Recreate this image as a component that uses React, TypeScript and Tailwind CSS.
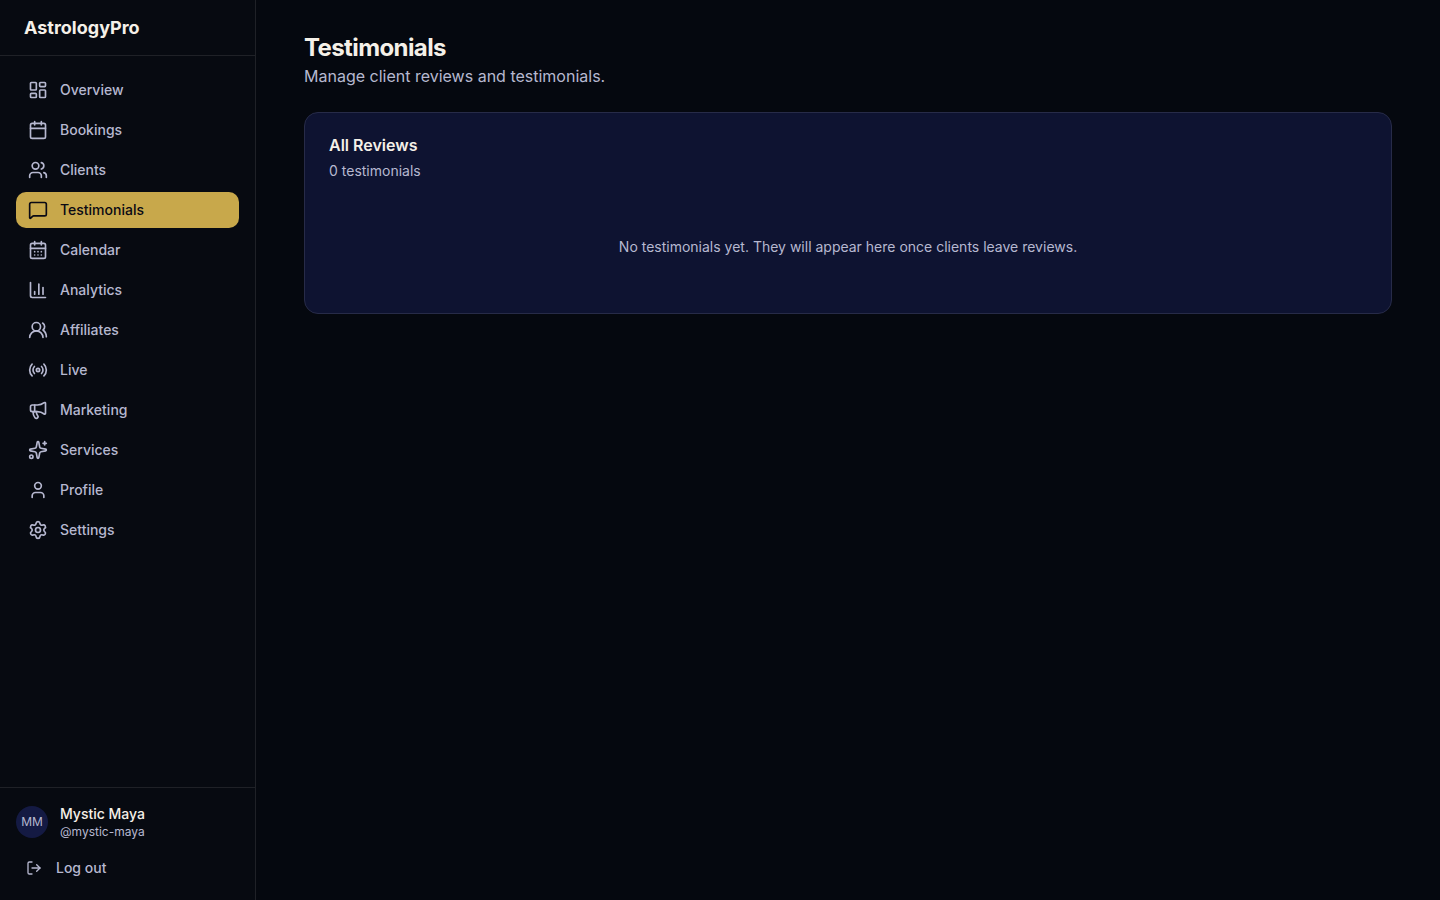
import {
  Calendar,
  CalendarDays,
  ChartColumn,
  LayoutDashboard,
  LogOut,
  Megaphone,
  MessageSquare,
  Radio,
  Settings,
  Sparkles,
  User,
  Users,
  UsersRound,
  type LucideIcon,
} from "lucide-react";

type NavItem = { label: string; href: string; icon: LucideIcon };

const navItems: NavItem[] = [
  { label: "Overview", href: "#overview", icon: LayoutDashboard },
  { label: "Bookings", href: "#bookings", icon: Calendar },
  { label: "Clients", href: "#clients", icon: Users },
  { label: "Testimonials", href: "#testimonials", icon: MessageSquare },
  { label: "Calendar", href: "#calendar", icon: CalendarDays },
  { label: "Analytics", href: "#analytics", icon: ChartColumn },
  { label: "Affiliates", href: "#affiliates", icon: UsersRound },
  { label: "Live", href: "#live", icon: Radio },
  { label: "Marketing", href: "#marketing", icon: Megaphone },
  { label: "Services", href: "#services", icon: Sparkles },
  { label: "Profile", href: "#profile", icon: User },
  { label: "Settings", href: "#settings", icon: Settings },
];

function Sidebar({ current }: { current: string }) {
  return (
    <aside className="sticky top-0 flex h-screen w-64 shrink-0 flex-col border-r border-[#1f2127] bg-[#070a11]">
      <div className="flex h-14 shrink-0 items-center border-b border-[#1f2127] px-6">
        <a href="#home" className="text-lg font-bold text-[#f5f0e8]">
          AstrologyPro
        </a>
      </div>
      <nav aria-label="Main" className="flex flex-1 flex-col gap-1 overflow-y-auto p-4">
        {navItems.map(({ label, href, icon: Icon }) => {
          const active = label === current;
          return (
            <a
              key={label}
              href={href}
              aria-current={active ? "page" : undefined}
              className={
                active
                  ? "flex items-center gap-3 rounded-[10px] bg-[#c8a84b] px-3 py-2 text-sm font-medium text-[#0a0a14]"
                  : "flex items-center gap-3 rounded-[10px] px-3 py-2 text-sm font-medium text-[#b6b8d0]"
              }
            >
              <Icon className="size-5 shrink-0" />
              {label}
            </a>
          );
        })}
      </nav>
      <div className="flex flex-col gap-3 border-t border-[#1f2127] p-4">
        <div className="flex items-center gap-3">
          <span className="flex size-8 shrink-0 items-center justify-center rounded-full bg-[#141a43] text-xs text-[#b6b8d0]">
            MM
          </span>
          <div className="min-w-0">
            <p className="truncate text-sm font-medium text-[#f5f0e8]">Mystic Maya</p>
            <p className="truncate text-xs text-[#b6b8d0]">@mystic-maya</p>
          </div>
        </div>
        <button
          type="button"
          className="flex h-8 items-center gap-3.5 rounded-lg px-2.5 text-sm font-medium text-[#b6b8d0]"
        >
          <LogOut className="size-4 shrink-0" />
          Log out
        </button>
      </div>
    </aside>
  );
}

export default function App() {
  return (
    <div className="flex min-h-screen bg-[#05080f] font-['Inter',sans-serif]">
      <Sidebar current="Testimonials" />
      <main className="min-w-0 flex-1 px-12 py-8">
        <h1 className="text-2xl font-bold tracking-tight text-[#f5f0e8]">Testimonials</h1>
        <p className="text-base text-[#b6b8d0]">Manage client reviews and testimonials.</p>
        <section className="mt-6 flex flex-col gap-6 rounded-[14px] border border-[#272b48] bg-[#0e1331] p-6">
          <header className="flex flex-col gap-2">
            <h2 className="text-base leading-none font-semibold text-[#f5f0e8]">All Reviews</h2>
            <p className="text-sm text-[#b6b8d0]">0 testimonials</p>
          </header>
          <p className="py-8 text-center text-sm text-[#b6b8d0]">
            No testimonials yet. They will appear here once clients leave reviews.
          </p>
        </section>
      </main>
    </div>
  );
}
